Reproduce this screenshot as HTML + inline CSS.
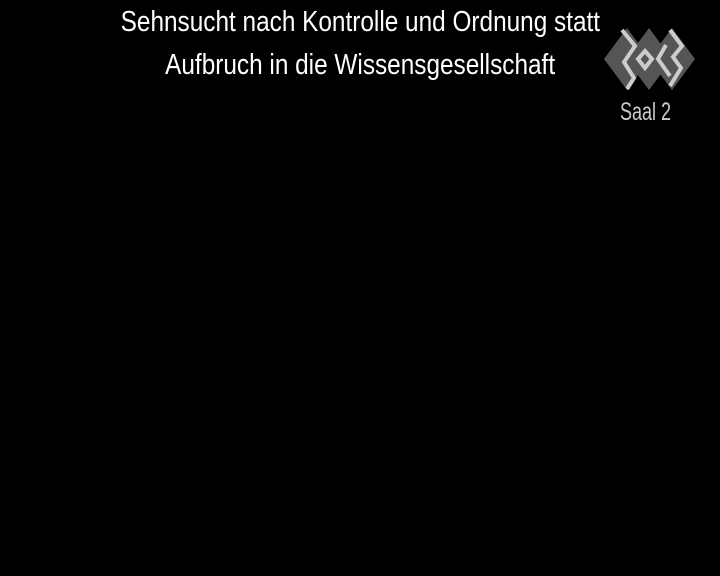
<!DOCTYPE html>
<html><head><style>
body{margin:0;width:720px;height:576px;background:#000;overflow:hidden;position:relative;font-family:"Liberation Sans",sans-serif}
.t{position:absolute;left:0;width:720px;text-align:center;color:#fff;font-size:29px;white-space:nowrap}
.t span{display:inline-block;transform:scaleX(0.84)}
.s{position:absolute;left:620px;top:98px;color:#ccc;font-size:25px;transform:scaleX(0.72);transform-origin:left}
</style></head><body>
<div class="t" style="top:6px"><span>Sehnsucht nach Kontrolle und Ordnung statt</span></div>
<div class="t" style="top:49px"><span>Aufbruch in die Wissensgesellschaft</span></div>
<svg style="position:absolute;left:0;top:0" width="720" height="576">
<g fill="#555">
<polygon points="627,28 650,59 627,90 604,59"/>
<polygon points="649,28 672,59 649,90 626,59"/>
<polygon points="672,28 695,59 672,90 649,59"/>
</g>
<g fill="none" stroke="#ccc" stroke-width="4" stroke-linejoin="miter">
<polyline points="622,30 635,46 624,62 634,78 627,89"/>
<polygon points="645,51 652,59 645,68 638,59"/>
<polyline points="666,45 658,59 670,76"/>
<polyline points="670,30 682,46 673,57 681,68 670,86"/>
</g>
</svg>
<div class="s">Saal 2</div>
</body></html>
